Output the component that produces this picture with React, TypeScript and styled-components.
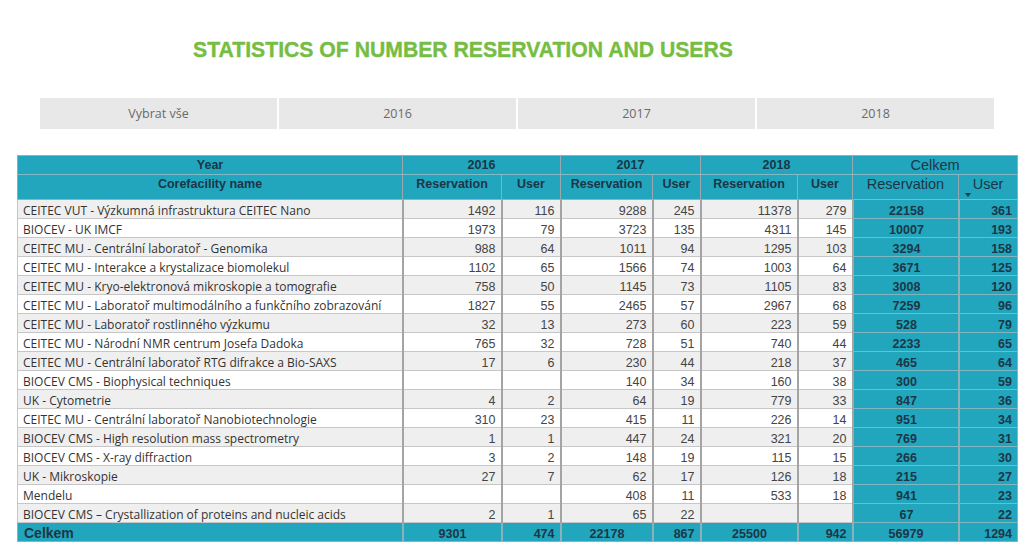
import React from "react";
import styled, { createGlobalStyle } from "styled-components";

const GlobalStyle = createGlobalStyle`
  html, body { margin: 0; padding: 0; background: #ffffff; }
  body { font-family: "Liberation Sans", Arial, sans-serif; }
`;

const TEAL = "#22a6be";
const HEAD_TEXT = "#1b3646";

const Page = styled.div`
  width: 1024px;
  height: 554px;
  overflow: hidden;
  display: flex;
  flex-direction: column;
`;

const Title = styled.h1`
  margin: 0;
  height: 98px;
  box-sizing: border-box;
  padding: 37px 0 0 193px;
  font-family: "Liberation Sans", Arial, sans-serif;
  font-weight: 700;
  font-size: 21.2px;
  line-height: 26px;
  color: #76bd43;
  -webkit-text-stroke: 0.35px #76bd43;
  white-space: nowrap;
`;

const Tabs = styled.div`
  display: grid;
  grid-template-columns: repeat(4, 237px);
  column-gap: 2px;
  margin-left: 40px;
  height: 31px;
`;

const Tab = styled.div`
  background: #e8e8e8;
  color: #6a6a6a;
  font-family: "Open Sans", "Noto Sans", sans-serif;
  font-size: 12.5px;
  display: flex;
  align-items: center;
  justify-content: center;
`;

const Table = styled.table`
  margin: 26px 0 0 17px;
  width: 1000px;
  table-layout: fixed;
  border-collapse: collapse;
  font-family: "Liberation Sans", Arial, sans-serif;
`;

const HeadCell = styled.th<{ $total?: boolean; $tall?: boolean }>`
  background: ${TEAL};
  color: ${HEAD_TEXT};
  font-weight: ${(p) => (p.$total ? 400 : 700)};
  font-size: ${(p) => (p.$total ? "14.5px" : "12.5px")};
  height: ${(p) => (p.$tall ? "24px" : "18px")};
  padding: 0 4px;
  text-align: center;
  vertical-align: top;
  line-height: 18px;
  border: 1px solid #7fbac6;
  border-left-color: #9aa9ad;
  border-right-color: #9aa9ad;
  position: relative;
  white-space: nowrap;
`;

const SortArrow = styled.span`
  position: absolute;
  left: 6px;
  top: 18px;
  width: 0;
  height: 0;
  border-left: 3px solid transparent;
  border-right: 3px solid transparent;
  border-top: 4px solid #1d3a4a;
`;

const Row = styled.tr<{ $odd: boolean }>`
  background: ${(p) => (p.$odd ? "#efefef" : "#ffffff")};
`;

const cellBox = `
  height: 14px;
  line-height: 14px;
  padding-top: 4px;
  padding-bottom: 0;
  white-space: nowrap;
`;

const NameCell = styled.td`
  ${cellBox}
  font-family: "Open Sans", "Noto Sans", sans-serif;
  font-size: 12px;
  color: #333;
  padding-left: 5px;
  overflow: hidden;
  border: 1px solid #c6c6c6;
  border-right: 2px solid #a4a4a4;
`;

const NumCell = styled.td`
  ${cellBox}
  font-size: 12.5px;
  color: #444;
  text-align: right;
  padding-right: 5px;
  border: 1px solid #c6c6c6;
  border-left: 2px solid #a4a4a4;
  border-right: 2px solid #a4a4a4;
`;

const TotalCell = styled.td<{ $align: "center" | "right" }>`
  ${cellBox}
  background: ${TEAL};
  color: ${HEAD_TEXT};
  font-weight: 700;
  font-size: 12.5px;
  text-align: ${(p) => p.$align};
  padding-right: ${(p) => (p.$align === "right" ? "5px" : "0")};
  padding-left: ${(p) => (p.$align === "right" ? "0" : "2px")};
  border: 1px solid #7fb6c1;
  border-left: 2px solid #8fb0b8;
`;

const FootRow = styled.tr`
  background: ${TEAL};
`;

const FootLabel = styled.td`
  color: ${HEAD_TEXT};
  font-weight: 700;
  font-size: 14px;
  padding: 2px 0 0 6px;
  height: 16px;
  line-height: 16px;
  border: 1px solid #7fb6c1;
  border-right: 2px solid #8fb0b8;
`;

const FootCell = styled.td<{ $align: "center" | "right" }>`
  ${cellBox}
  color: ${HEAD_TEXT};
  font-weight: 700;
  font-size: 12.5px;
  text-align: ${(p) => p.$align};
  padding-right: ${(p) => (p.$align === "right" ? "5px" : "0")};
  border: 1px solid #7fb6c1;
  border-left: 2px solid #8fb0b8;
`;

type Rec = [string, number | null, number | null, number | null, number | null, number | null, number | null, number, number];

const rows: Rec[] = [
  ["CEITEC VUT - Výzkumná infrastruktura CEITEC Nano", 1492, 116, 9288, 245, 11378, 279, 22158, 361],
  ["BIOCEV - UK IMCF", 1973, 79, 3723, 135, 4311, 145, 10007, 193],
  ["CEITEC MU - Centrální laboratoř - Genomika", 988, 64, 1011, 94, 1295, 103, 3294, 158],
  ["CEITEC MU - Interakce a krystalizace biomolekul", 1102, 65, 1566, 74, 1003, 64, 3671, 125],
  ["CEITEC MU - Kryo-elektronová mikroskopie a tomografie", 758, 50, 1145, 73, 1105, 83, 3008, 120],
  ["CEITEC MU - Laboratoř multimodálního a funkčního zobrazování", 1827, 55, 2465, 57, 2967, 68, 7259, 96],
  ["CEITEC MU - Laboratoř rostlinného výzkumu", 32, 13, 273, 60, 223, 59, 528, 79],
  ["CEITEC MU - Národní NMR centrum Josefa Dadoka", 765, 32, 728, 51, 740, 44, 2233, 65],
  ["CEITEC MU - Centrální laboratoř RTG difrakce a Bio-SAXS", 17, 6, 230, 44, 218, 37, 465, 64],
  ["BIOCEV CMS - Biophysical techniques", null, null, 140, 34, 160, 38, 300, 59],
  ["UK - Cytometrie", 4, 2, 64, 19, 779, 33, 847, 36],
  ["CEITEC MU - Centrální laboratoř Nanobiotechnologie", 310, 23, 415, 11, 226, 14, 951, 34],
  ["BIOCEV CMS - High resolution mass spectrometry", 1, 1, 447, 24, 321, 20, 769, 31],
  ["BIOCEV CMS - X-ray diffraction", 3, 2, 148, 19, 115, 15, 266, 30],
  ["UK - Mikroskopie", 27, 7, 62, 17, 126, 18, 215, 27],
  ["Mendelu", null, null, 408, 11, 533, 18, 941, 23],
  ["BIOCEV CMS – Crystallization of proteins and nucleic acids", 2, 1, 65, 22, null, null, 67, 22],
];

const totals = [9301, 474, 22178, 867, 25500, 942, 56979, 1294];
const widths = [385, 99, 59, 92, 48, 97, 55, 106, 59];

export default function App() {
  return (
    <Page>
      <GlobalStyle />
      <Title>STATISTICS OF NUMBER RESERVATION AND USERS</Title>
      <Tabs>
        <Tab>Vybrat vše</Tab>
        <Tab>2016</Tab>
        <Tab>2017</Tab>
        <Tab>2018</Tab>
      </Tabs>
      <Table>
        <colgroup>
          {widths.map((w, i) => (
            <col key={i} style={{ width: w }} />
          ))}
        </colgroup>
        <thead>
          <tr>
            <HeadCell>Year</HeadCell>
            <HeadCell colSpan={2}>2016</HeadCell>
            <HeadCell colSpan={2}>2017</HeadCell>
            <HeadCell colSpan={2}>2018</HeadCell>
            <HeadCell colSpan={2} $total>Celkem</HeadCell>
          </tr>
          <tr>
            <HeadCell $tall>Corefacility name</HeadCell>
            <HeadCell $tall>Reservation</HeadCell>
            <HeadCell $tall>User</HeadCell>
            <HeadCell $tall>Reservation</HeadCell>
            <HeadCell $tall>User</HeadCell>
            <HeadCell $tall>Reservation</HeadCell>
            <HeadCell $tall>User</HeadCell>
            <HeadCell $tall $total>Reservation</HeadCell>
            <HeadCell $tall $total>
              User
              <SortArrow />
            </HeadCell>
          </tr>
        </thead>
        <tbody>
          {rows.map((r, i) => (
            <Row key={r[0]} $odd={i % 2 === 0}>
              <NameCell>{r[0]}</NameCell>
              {r.slice(1, 7).map((v, j) => (
                <NumCell key={j}>{v ?? ""}</NumCell>
              ))}
              <TotalCell $align="center">{r[7]}</TotalCell>
              <TotalCell $align="right">{r[8]}</TotalCell>
            </Row>
          ))}
          <FootRow>
            <FootLabel>Celkem</FootLabel>
            {totals.map((t, j) => (
              <FootCell key={j} $align={j % 2 === 0 ? "center" : "right"}>
                {t}
              </FootCell>
            ))}
          </FootRow>
        </tbody>
      </Table>
    </Page>
  );
}
